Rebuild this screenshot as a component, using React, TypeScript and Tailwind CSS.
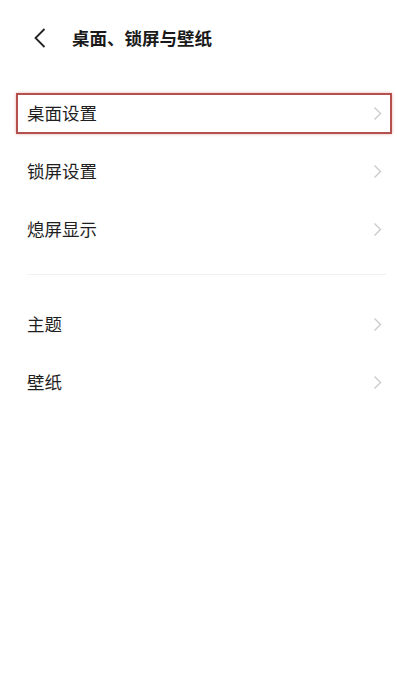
import React from "react";

const groups: string[][] = [
  ["桌面设置", "锁屏设置", "熄屏显示"],
  ["主题", "壁纸"],
];

function Chevron() {
  return (
    <svg width="9" height="15" viewBox="0 0 9 15" fill="none" className="shrink-0">
      <path d="M1.5 1.5 L7.5 7.5 L1.5 13.5" stroke="#c9c9c9" strokeWidth="1.3" />
    </svg>
  );
}

function Row({ label, marked }: { label: string; marked?: boolean }) {
  return (
    <div className="relative h-[58px] flex items-center justify-between pl-[27px] pr-[16px]">
      <span className="text-[17.5px] text-[#1f1f1f] leading-none">{label}</span>
      <Chevron />
      {marked && (
        <div className="absolute left-[16px] right-[6px] top-[9px] bottom-[8px] border-2 border-[#b4504e] shadow-[0_0_3px_rgba(200,80,80,0.45)]" />
      )}
    </div>
  );
}

export default function App() {
  return (
    <div
      className="w-[398px] h-[680px] bg-white overflow-hidden"
      style={{ fontFamily: '"Noto Sans CJK SC", "Noto Sans", sans-serif' }}
    >
      {/* Header */}
      <div className="h-[84px] flex items-start pt-[28px]">
        <div className="w-[72px] flex pl-[34px]">
          <svg width="12" height="20" viewBox="0 0 12 20" fill="none">
            <path d="M10.5 1 L1.5 10 L10.5 19" stroke="#222" strokeWidth="1.8" />
          </svg>
        </div>
        <h1 className="text-[17.5px] font-semibold text-[#1a1a1a] leading-[20px]">桌面、锁屏与壁纸</h1>
      </div>

      {/* List */}
      <div>
        {groups[0].map((l, i) => (
          <Row key={l} label={l} marked={i === 0} />
        ))}
      </div>
      <div className="ml-[27px] mr-[12px] mt-[16px] mb-[20px] h-px bg-[#f1f1f1]" />
      <div>
        {groups[1].map((l) => (
          <Row key={l} label={l} />
        ))}
      </div>
    </div>
  );
}
